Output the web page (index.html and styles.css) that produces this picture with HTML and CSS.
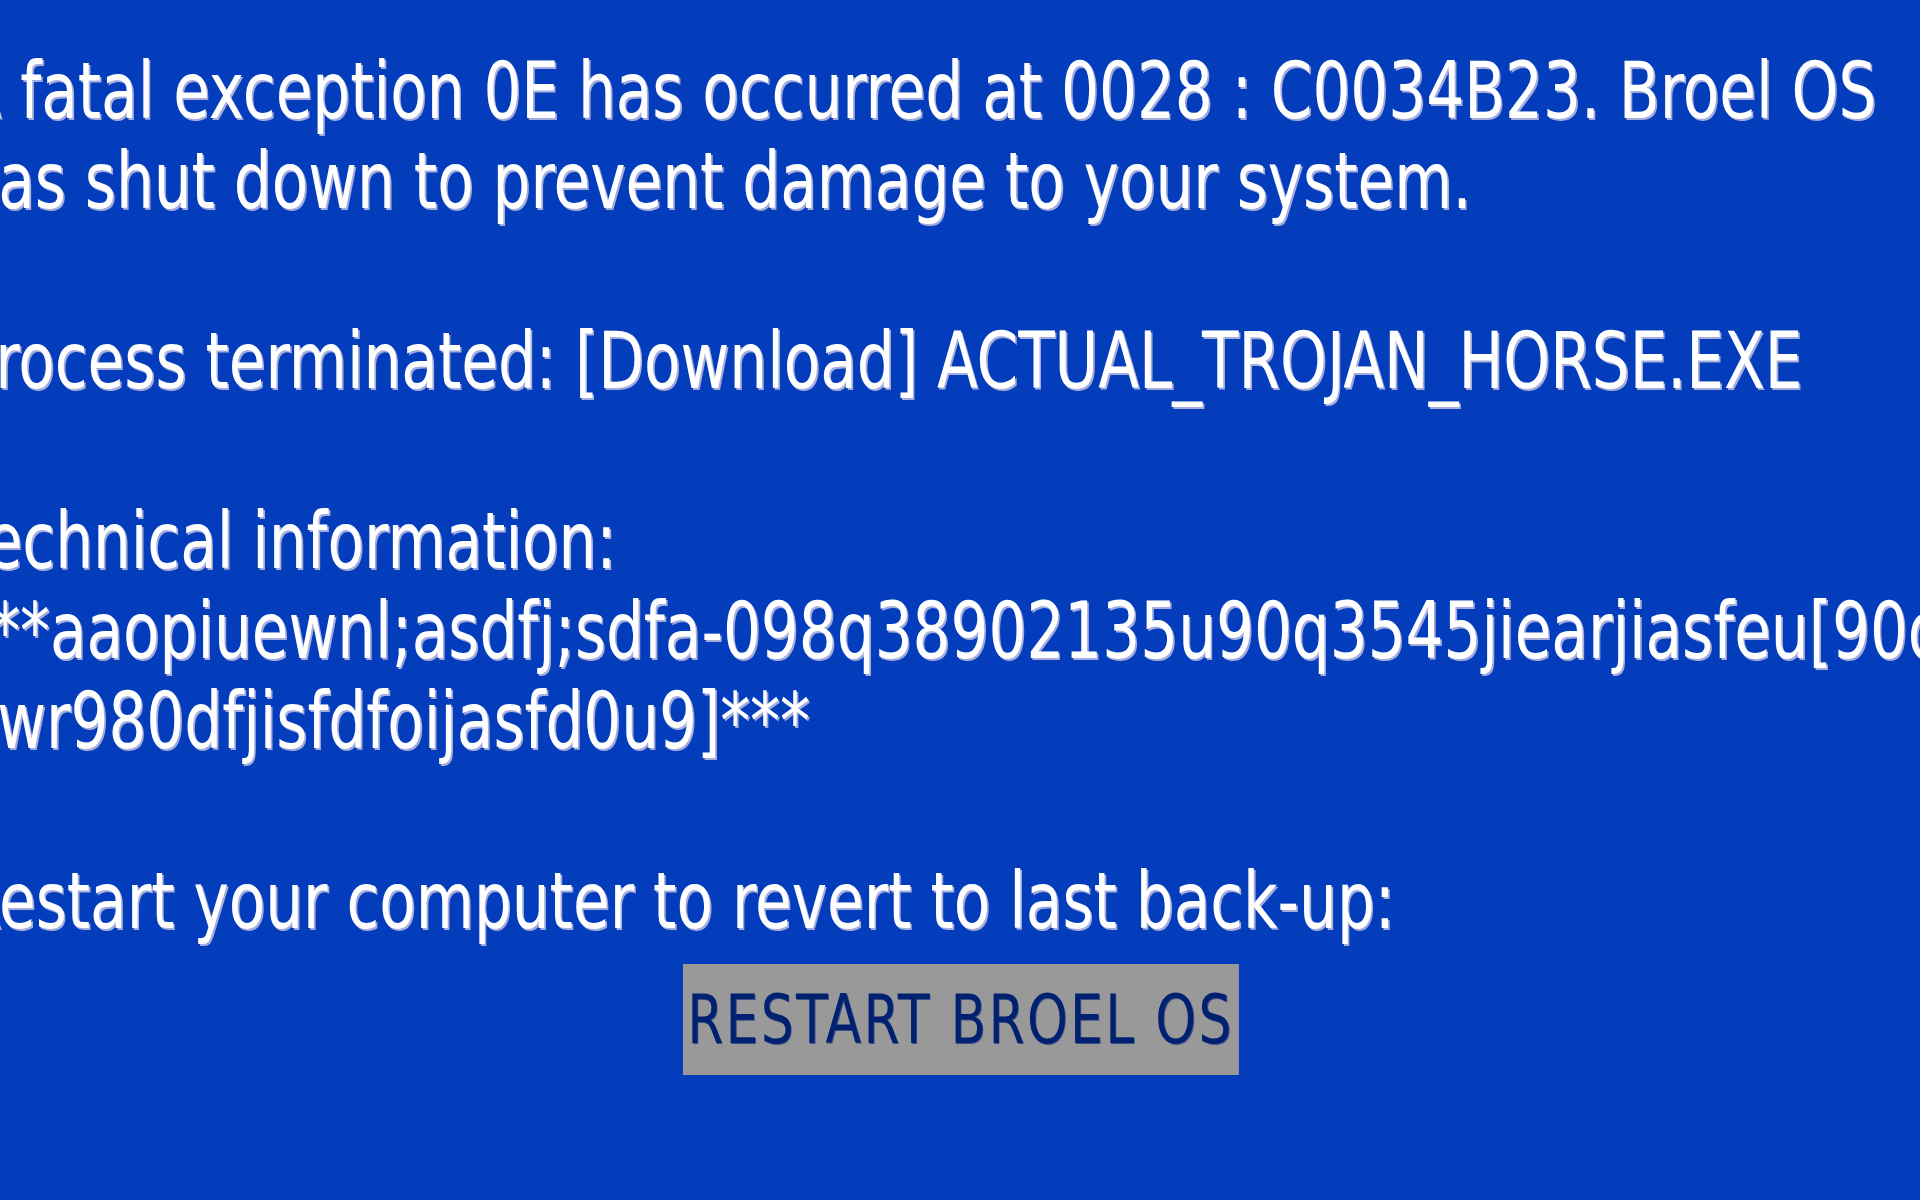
FILE: index.html
```html
<!DOCTYPE html>
<html lang="en">
<head>
<meta charset="utf-8">
<title>Broel OS</title>
<link rel="stylesheet" href="styles.css">
</head>
<body>
<main class="screen">
  <p class="msg">A fatal exception 0E has occurred at 0028 : C0034B23. Broel OS has shut down to prevent damage to your system.</p>
  <p class="msg">Process terminated: [Download] ACTUAL_TROJAN_HORSE.EXE</p>
  <p class="msg">Technical information:<br><span class="code">***aaopiuewnl;asdfj;sdfa-098q38902135u90q3545jiearjiasfeu[90qewr980dfjisfdfoijasfd0u9]***</span></p>
  <p class="msg">Restart your computer to revert to last back-up:</p>
  <div class="actions">
    <button class="restart" type="button">RESTART BROEL OS</button>
  </div>
</main>
</body>
</html>
```
FILE: styles.css
```css
html, body {
  margin: 0;
  padding: 0;
  height: 100%;
  overflow: hidden;
  background: #033dbb;
}

body {
  display: flex;
  justify-content: center;
  align-items: flex-start;
}

/* the pixel screen font is tall and narrow: condense the whole screen horizontally */
.screen {
  flex: 0 0 2353px;
  width: 2353px;
  padding-top: 46px;
  transform: scaleX(0.85);
  transform-origin: 50% 0;
  font-family: "DejaVu Sans Condensed", "Liberation Sans", sans-serif;
  font-size: 78px;
  line-height: 90px;
  color: #ffffff;
  text-shadow: 2px 2px 0 #a3acdd;
}

.msg {
  margin: 0 0 90px 0;
}

.msg:nth-of-type(4) {
  margin-bottom: 0;
}

.code {
  word-break: break-all;
}

.actions {
  display: flex;
  justify-content: center;
  padding-top: 18px;
}

.restart {
  width: 654px;
  height: 111px;
  padding: 0;
  border: none;
  border-radius: 0;
  background: #999999;
  color: #00216f;
  font-family: "DejaVu Sans Condensed", "Liberation Sans", sans-serif;
  font-size: 68px;
  letter-spacing: 2.7px;
  line-height: 111px;
  white-space: nowrap;
  text-shadow: 1px 1px 0 #3c4f86;
  cursor: pointer;
}
```
